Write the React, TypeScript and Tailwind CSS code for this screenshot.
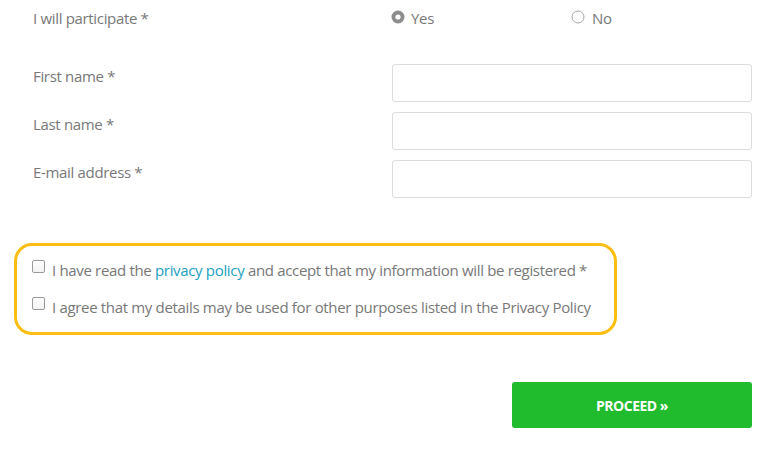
import React from "react";

function Radio({ checked }: { checked?: boolean }) {
  return checked ? (
    <svg width="14" height="14" viewBox="0 0 14 14" className="shrink-0">
      <circle cx="7" cy="7" r="6.5" fill="#8c8c8c" />
      <circle cx="7" cy="7" r="2.6" fill="#ffffff" />
    </svg>
  ) : (
    <svg width="14" height="14" viewBox="0 0 14 14" className="shrink-0">
      <circle cx="7" cy="7" r="6" fill="#ffffff" stroke="#a8a8a8" strokeWidth="1" />
    </svg>
  );
}

function Checkbox() {
  return (
    <span className="inline-block h-[13px] w-[13px] shrink-0 rounded-[2px] border border-[#9a9a9a] bg-gradient-to-b from-white to-[#f3f3f3]" />
  );
}

function Field({ label }: { label: string }) {
  return (
    <div className="flex">
      <div className="w-[359px] pt-[2px] leading-[20px]">{label}</div>
      <input
        type="text"
        className="h-[38px] w-[360px] rounded-[3px] border border-[#dcdcdc] bg-white outline-none"
      />
    </div>
  );
}

export default function App() {
  return (
    <div className="relative h-[452px] w-[778px] overflow-hidden bg-white font-['Open_Sans','Lato',sans-serif] text-[15px] font-medium tracking-[-0.33px] text-[#787878]">
      <div className="pl-[33px] pt-[8px]">
        <div className="flex leading-[20px]">
          <div className="w-[358px]">I will participate *</div>
          <label className="flex w-[180px] items-center gap-[6px]">
            <span className="-mt-[3px] flex"><Radio checked /></span>
            <span>Yes</span>
          </label>
          <label className="flex items-center gap-[7px]">
            <span className="-mt-[3px] flex"><Radio /></span>
            <span>No</span>
          </label>
        </div>
        <div className="mt-[36px] flex flex-col gap-[10px]">
          <Field label="First name *" />
          <Field label="Last name *" />
          <Field label="E-mail address *" />
        </div>
      </div>

      <div className="ml-[14px] mt-[45px] h-[92px] w-[603px] rounded-[18px] border-[3px] border-[#fcbe12] pl-[15px] pt-[14px]">
        <div className="flex items-start gap-[7px] leading-[20px]">
          <Checkbox />
          <span>
            I have read the <a className="text-[#1aa0c0]">privacy policy</a> and accept that my information will be registered *
          </span>
        </div>
        <div className="mt-[17px] flex items-start gap-[7px] leading-[20px]">
          <Checkbox />
          <span>I agree that my details may be used for other purposes listed in the Privacy Policy</span>
        </div>
      </div>

      <div className="mt-[47px] flex pl-[512px]">
        <button className="flex h-[46px] w-[240px] items-center justify-center rounded-[3px] bg-[#21bb2e] text-[14px] font-bold text-white tracking-[-0.5px]">
          PROCEED »
        </button>
      </div>
    </div>
  );
}
